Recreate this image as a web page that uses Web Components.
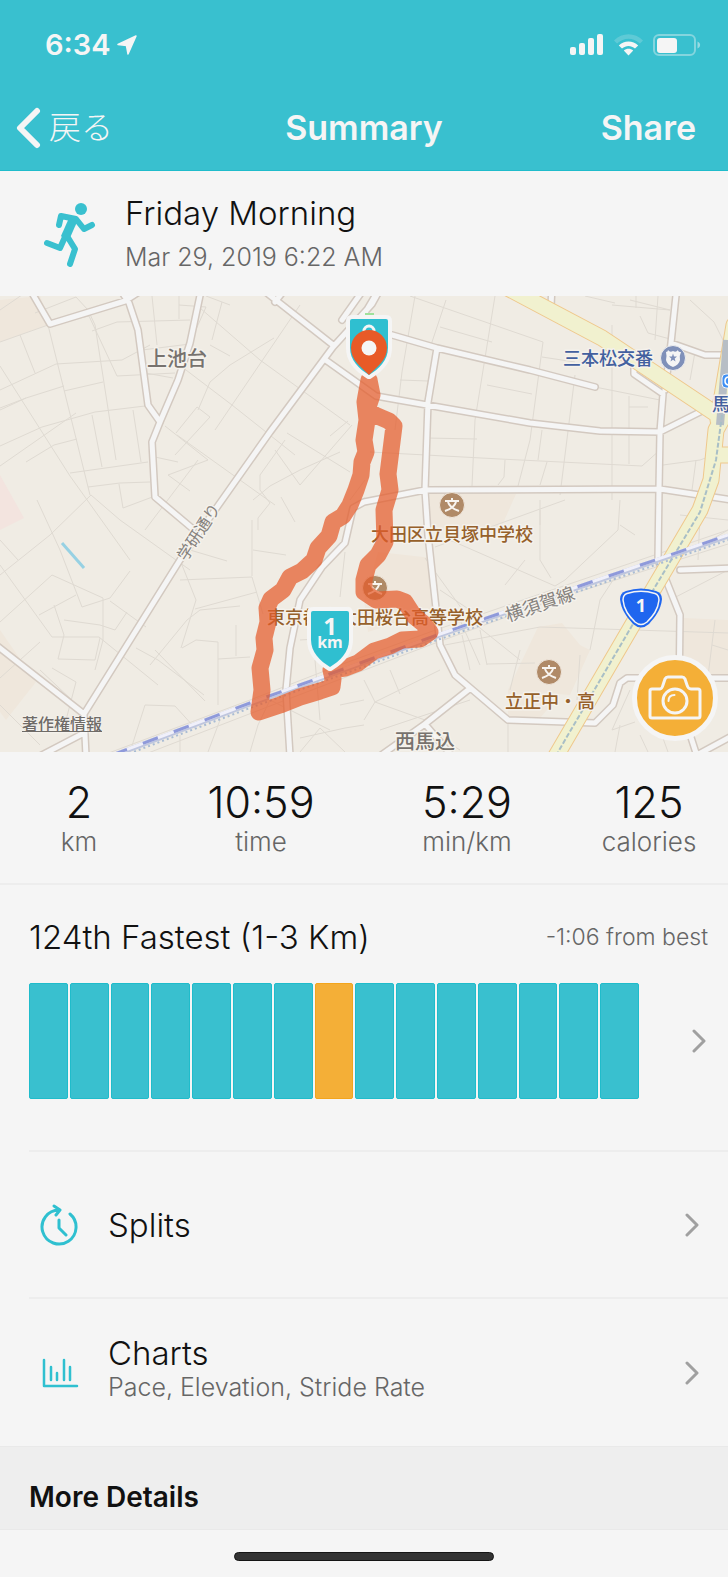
<!DOCTYPE html>
<html lang="en">
<head>
<meta charset="utf-8">
<meta name="viewport" content="width=device-width, initial-scale=1">
<title>Summary</title>
<style>
  body { margin: 0; background: #f5f5f5; color: #111; font-family: Inter, "Noto Sans CJK JP", sans-serif; }
</style>
</head>
<body>
<run-summary></run-summary>

<script>
const define = (name, html) => customElements.define(name, class extends HTMLElement {
  constructor() {
    super();
    this.attachShadow({ mode: 'open' }).innerHTML = html;
  }
});

define('status-bar', `
  <style>
    :host { display: flex; align-items: center; justify-content: space-between; height: 88px; padding: 2px 27px 0 45px; box-sizing: border-box; }
    .time, .signs { display: flex; align-items: center; }
    .time { gap: 6px; font-size: 29px; font-weight: 600; line-height: 32px; }
    .signs { gap: 10px; }
    svg { display: block; fill: currentColor; }
  </style>
  <div class="time"><span>6:34</span>
    <svg width="20" height="20" viewBox="0 0 20 20"><path d="M19 1 11 19 9.500 10.500 1 9.500Z" stroke="currentColor" stroke-width="1.500" stroke-linejoin="round"/></svg>
  </div>
  <div class="signs">
    <svg width="34" height="22" viewBox="0 0 34 22"><rect y="13" width="6" height="8" rx="2"/><rect x="9" y="9" width="6" height="12" rx="2"/><rect x="18" y="4" width="6" height="17" rx="2"/><rect x="27" width="6" height="21" rx="2"/></svg>
    <svg width="29" height="22" viewBox="0 0 29 22"><path opacity=".2" d="M0 6.500C8-2 21-2 29 6.500L26 9.500C19 3 10 3 3 9.500Z"/><path d="M4.800 11.500C10 6 19 6 24.200 11.500L21 14.500C17 11 12 11 8 14.500Z"/><path d="M9.800 16.500C12.500 14.200 16.500 14.200 19.200 16.500L14.500 21.500Z"/></svg>
    <svg width="48" height="22" viewBox="0 0 48 22"><rect x="1" y="1" width="41" height="20" rx="5" fill="none" stroke="currentColor" stroke-width="2" opacity=".4"/><rect x="4" y="4" width="20" height="15" rx="3"/><path d="M44.500 7.500C48 9 48 13 44.500 14.500Z" opacity=".5"/></svg>
  </div>`);

define('nav-bar', `
  <style>
    :host { display: grid; grid-template-columns: 1fr auto 1fr; align-items: center; height: 82px; padding: 0 32px 2px; box-sizing: border-box; }
    button { all: unset; cursor: pointer; display: flex; align-items: center; font-size: 34px; line-height: 48px; }
    .back { justify-self: start; gap: 8px; margin-left: -16px; font-size: 32px; font-weight: 300; }
    .share { justify-self: end; font-weight: 600; }
    h1 { margin: 0; font-size: 34px; line-height: 48px; font-weight: 600; }
    svg { display: block; }
  </style>
  <button class="back"><svg width="25" height="42" viewBox="0 0 25 42" fill="none" stroke="currentColor" stroke-width="6" stroke-linecap="round" stroke-linejoin="round"><path d="M21 4 4 21 21 38"/></svg><span><slot name="back"></slot></span></button>
  <h1><slot></slot></h1>
  <button class="share"><slot name="action"></slot></button>`);

define('activity-head', `
  <style>
    :host { display: flex; align-items: center; gap: 29px; height: 125px; padding: 0 44px; box-sizing: border-box; }
    svg { display: block; color: #39c0cf; }
    .name { font-size: 33px; line-height: 46px; font-weight: 300; }
    .date { font-size: 25px; line-height: 42px; font-weight: 300; color: #666; }
    h2, p { margin: 0; }
  </style>
  <svg width="52" height="66" viewBox="0 0 52 66" fill="none" stroke="currentColor" stroke-linecap="round" stroke-linejoin="round">
    <circle cx="37" cy="8" r="6" fill="currentColor" stroke="none"/>
    <path d="M15 24 17 15 32 18 40 28 48 24M21 36 16 47 3 42M23 35 31 48 26 63" stroke-width="6"/><path d="M29 19 21 37" stroke-width="9" stroke-linecap="butt"/>
  </svg>
  <div><h2 class="name"><slot></slot></h2><p class="date"><slot name="date"></slot></p></div>`);

define('camera-button', `
  <style>
    :host { display: block; }
    button { all: unset; cursor: pointer; display: grid; place-items: center; width: 76px; height: 76px; border: 5px solid #f5f5f5; border-radius: 50%; background: #f4af37; }
    svg { display: block; }
  </style>
  <button aria-label="Add photo"><svg width="54" height="46" viewBox="0 0 54 46" fill="none" stroke="#f5f5f5" stroke-width="3" stroke-linejoin="round">
    <path d="M4 14H12Q14 14 15 10L17 4Q18 2 20 2H34Q36 2 37 4L39 10Q40 14 43 14H50Q52 14 52 16V41Q52 43 50 43H4Q2 43 2 41V16Q2 14 4 14Z"/><circle cx="27" cy="26" r="12"/><path d="M20.500 26Q20.500 20 26.500 20" stroke-width="2" stroke-linecap="round"/></svg></button>`);

define('route-map', `
  <style>
    :host { display: block; position: relative; }
    svg { display: block; width: 100%; height: auto; font-family: "Noto Sans CJK JP", sans-serif; }
    .halo { paint-order: stroke; stroke: #f5f2ec; stroke-width: 3px; stroke-linejoin: round; }
    .school { fill: #96602a; font-size: 18px; font-weight: 500; }
    .area { fill: #77726e; font-size: 20px; font-weight: 500; }
    .way { fill: #85817d; }
    .blue { fill: #43609f; font-size: 18px; font-weight: 500; }
    .bold { font-family: "Open Sans", "Noto Sans", sans-serif; font-weight: 700; fill: #f5f5f5; text-anchor: middle; }
    a { position: absolute; left: 22px; bottom: 17px; font: 500 16px/24px "Noto Sans CJK JP", sans-serif; color: #6f6b67; text-shadow: 0 0 2px #fff; }
    camera-button { position: absolute; right: 10px; bottom: 11px; }
  </style>
  <svg viewBox="0 296 728 456" role="img" aria-label="Map of the run">
    <defs>
      <path id="roads" d="M28 286 50 324 125 301 145 288M118 286 129 303 138 330 148 405 160 422M202 286 190 343 178 380 160 422 152 442 155 497 193 529M382 286 372 304 333 347 270 432 215 510 180 560 84 714 86 756M40 756 84 733M-4 645 84 714M258 286 333 345M275 302 286 288M327 361 362 386 376 396 427 405 530 423 600 431 660 432 702 411M375 330 437 348 530 370 595 387M437 348 428 402 425 490 428 535 440 645 455 675 508 720 595 723 613 705 620 683 627 678 732 678M364 502 425 490 660 489 732 500M634 365 634 374 663 394 660 432 659 489 658 560 680 615 679 700 697 756M677 286 671 343 665 390M671 343 705 355 732 355M552 286 551 306M680 570 732 568M468 690 425 724 380 756M425 724 452 756M364 502 353 508 345 543 322 567 300 600 290 648 286 690 290 756M695 756 732 736M366 286 342 320M381 286 362 318"/>
      <path id="avenues" d="M500 284 602 338 722 418M735 396 716 430 711 480 700 510 640 612 556 756M734 325 718 420M716 455H732"/>
      <g id="school"><circle r="12.500" fill="#b08a67" stroke="#efe6dc"/><path d="M0-7V-4M-7-4H7M-4-3Q-2 3 7 6M4-3Q2 3-7 6" fill="none" stroke="#f8f4ef" stroke-width="2"/></g>
      <path id="badge" d="M-17-28H17Q19-28 19-26V1C19 13 10 22 0 28C-10 22-19 13-19 1V-26Q-19-28-17-28Z"/>
    </defs>
    <rect y="296" width="728" height="456" fill="#f0ece4"/>
    <path fill="#efe7dc" d="M0 300 40 296 50 324 0 342ZM0 630 36 682 6 720 0 712ZM430 494 516 494 500 530 428 528ZM378 552 432 558 436 610 368 632 364 600ZM538 627 562 623 580 645 590 650 570 695 508 690ZM508 690 560 695 540 718 508 718ZM684 618 728 620V676H682Z"/>
    <path fill="#f3e4df" d="M0 475 24 518 0 530Z"/>
    <g fill="none" stroke="#dfdad2" stroke-width="1">
      <path d="M0 342 48 325 89 316M20 335 35 373M0 390 56 364 122 360 150 345M89 316 117 376 175 373M48 325 90 495M64 391 103 382M0 408 26 398 64 386M0 446 42 427 95 412 145 406M0 466 76 413M0 366 70 476 130 560M26 462 54 445 77 439M92 415 102 467M70 473 148 462M133 410 141 462M88 487 120 483 150 482M119 484 123 508 155 496M26 398 0 410M0 575 50 535 91 495 120 520 190 570M37 500 60 550 82 607 110 598 130 571M0 622 52 575 103 598M0 565 52 637 99 637M76 595 39 615M54 605 64 635 58 659 95 660 100 638M64 620 100 625 115 630 127 612M40 642 0 678M52 668 76 682 66 720M0 540 18 560M103 598V640L95 670M99 637 158 685M110 601 146 627M150 665 187 620 200 610 240 606M182 648 196 640 218 642V705M218 659 250 657M236 625V656M180 580 252 577 263 614M180 560 196 600 181 648M190 550 227 561M195 609 257 592M252 520V576M253 550 286 555M253 500 270 486 300 470 340 452M260 475 260 490 270 503 258 518V530M275 450 300 485 352 425M260 475 285 440M281 497 295 522M198 410 210 382 230 365 274 338M186 370 232 405 295 455M177 435 275 505M165 426 208 460 168 475 190 491M176 433 197 407 210 417 175 455M215 430 300 305M198 460 145 530M140 372 173 378M155 457 178 462M179 305 206 307 190 343M200 308 260 360 350 425M210 345 230 356M212 340 222 302M287 433 350 472M330 436 348 421M0 310 35 286M35 313 76 297 88 310 95 325 102 370 116 460M92 331 117 322 190 320M152 296 157 345M179 292V319M206 296 230 305M142 350 190 344M74 702 40 670M0 705 40 745M130 752 145 705 175 706 195 728M155 650 205 701M136 648 158 660 204 695M180 752V735M208 752 220 720M250 752 258 725 270 700 330 730M300 738 345 728 364 725"/>
      <path d="M410 296 543 342M415 296 402 372 395 430M446 300 430 348M495 296 475 420 472 486M440 327 492 342M542 357 575 362M400 380 428 381M487 385 532 394M543 342 530 440 518 486M575 375 560 495M542 430 538 460M426 438 477 439M370 452 500 459 642 466 660 450M612 325V500M629 396V464M629 407H648M595 387 660 400M640 316 648 333 670 339M612 305 670 310 630 300M690 300 714 322 728 350M695 352 690 380M663 465 700 460 728 450M696 460 692 490M505 460 504 477 498 485M547 462 540 485M540 510V525M585 296 615 303M636 296V308M658 296 655 340M620 500 618 530 565 580 555 586 450 540M435 547 565 500M425 558 470 620 520 660M440 590 470 610M460 620 480 665M480 630 487 665M462 635 470 670M487 664 535 663M445 645 540 627 728 633M505 585 525 560M540 500V560L551 578M617 574 600 600 590 650M620 525 635 535M580 655 577 700M520 650 510 690M364 680 375 702 440 670M375 702 364 720M375 702 425 720M400 694 390 670M380 730 470 700M425 728 460 750M508 720V752M630 690 612 730 635 722M620 725 615 752M660 730 668 752M640 735 648 752M715 620 705 700M728 650 712 645M670 600 728 570M680 515 728 520M700 515 698 560M728 530 690 552M345 552 340 597M350 500 365 480M300 640 330 638M315 660 320 720M340 705 364 700M300 752 320 728 345 752"/>
      <path d="M90 760 250 700 340 665 430 632 540 594 728 530M130 760 270 706 430 645 550 601 728 544"/>
    </g>
    <path d="M62 543 84 568" stroke="#97d1e3" stroke-width="3"/>
    <g fill="none" stroke-linejoin="round" stroke-linecap="round">
      <use href="#roads" stroke="#d3c9c0" stroke-width="8"/>
      <use href="#roads" stroke="#f5f5f5" stroke-width="5"/>
      <use href="#avenues" stroke="#efc88c" stroke-width="17"/>
      <use href="#avenues" stroke="#f1f1cf" stroke-width="15"/>
    </g>
    <path d="M727 340 720 425" stroke="#b7bec5" stroke-width="8"/>
    <path d="M722 415 716 460 700 512 640 612 558 752" fill="none" stroke="#a9bfc6" stroke-width="2" stroke-dasharray="5 2"/>
    <g fill="none">
      <path d="M112 756 250 704 440 635 728 536" stroke="#bfc6de" stroke-width="5"/>
      <path d="M112 755 250 703 440 634 728 535" stroke="#f0f0fa" stroke-width="3"/>
      <path d="M112 755 250 703 440 634 728 535" stroke="#8f9ada" stroke-width="3" stroke-dasharray="16 17"/>
      <path d="M120 757 250 708 440 639 728 540" stroke="#a9bcd4" stroke-width="2" stroke-dasharray="2 3"/>
    </g>
    <use href="#school" x="452" y="505"/><use href="#school" x="375" y="588"/><use href="#school" x="549" y="672"/>
    <g class="halo">
      <text class="area" x="147" y="366">上池台</text>
      <text class="area" x="395" y="749">西馬込</text>
      <text class="blue" x="563" y="365">三本松交番</text>
      <text class="blue" x="712" y="411">馬</text>
      <text class="school" x="371" y="541">大田区立貝塚中学校</text>
      <text class="school" x="267" y="624">東京都立大田桜台高等学校</text>
      <text class="school" x="505" y="708">立正中・高</text>
      <text class="way" font-size="18" transform="translate(508 622) rotate(-19)">横須賀線</text>
      <text class="way" font-size="16" transform="translate(186 562) rotate(-57)">学研通り</text>
    </g>
    <circle cx="673" cy="358" r="12.500" fill="#7f90b9" stroke="#eee"/>
    <path d="M666 352Q668 352 668 350Q670 353 673 351Q676 353 678 350Q678 352 681 352Q679 356 680 360Q679 365 673 367Q667 365 666 360Q667 356 666 352Z" fill="#f5f5f5"/>
    <path d="M673 353.500 674 356.500H677L674.700 358.500 675.500 361.500 673 359.700 670.500 361.500 671.300 358.500 669 356.500H672Z" fill="#7f90b9"/>
    <rect x="722" y="374" width="16" height="14" rx="4" fill="#3f90f4" stroke="#f5f5f5"/><path d="M729 377Q725 377 725 381T729 385" fill="none" stroke="#fff" stroke-width="1.500"/>
    <path d="M626 591Q641 586 656 591Q662 593 662 599C661 610 655 617 649 624Q641 631 633 624C627 617 621 610 620 599Q620 593 626 591Z" fill="#1f66ef"/>
    <path d="M627 593.500Q641 589 655 593.500Q659 595 659 600C658 610 653 616 647 622Q641 627 635 622C629 616 624 610 623 600Q623 595 627 593.500Z" fill="none" stroke="#f5f5f5" stroke-width="1.500"/>
    <text class="bold" x="641" y="612" font-size="18">1</text>
    <path fill="none" stroke="#e45b2b" stroke-opacity=".72" stroke-width="17" stroke-linejoin="round" stroke-linecap="round" d="M369 380 366 396 365 402 367 420 364 440 366 452 362 462 361 475 356 490 350 505 343 516 333 522 329 536 318 548 314 560 302 571 290 577 283 590 271 599 267 608 268 622 264 638 265 650 260 668 262 690 259 712 280 705 300 697 320 691 332 687 333 679 331 670 345 668 358 663 374 651 390 646 402 640 420 639 430 632 424 624 414 616 405 602 397 599 376 600 364 592 364 580 368 565 378 555 385 542 384 510 390 490 388 474 391 450 394 426 389 421 375 415 367 410 372 395 369 380"/>
    <g transform="translate(369 347)">
      <path d="M-4-34H5V-30H-4Z" fill="#9fe19b"/>
      <use href="#badge" fill="none" stroke="#f5f5f5" stroke-width="8" stroke-linejoin="round"/>
      <use href="#badge" fill="#2fbfd0"/>
      <circle cy="-16" r="5" fill="none" stroke="#f5f5f5" stroke-width="3"/>
      <path d="M0 28C-8 20-18 13-18 1A18 18 0 0 1 18 1C18 13 8 20 0 28Z" fill="#e85a27"/><circle cy="1" r="7.500" fill="#f5f5f5"/>
    </g>
    <g transform="translate(330 639)"><use href="#badge" fill="none" stroke="#f5f5f5" stroke-width="8" stroke-linejoin="round"/><use href="#badge" fill="#2fbfd0"/><text class="bold" y="-4" font-size="24">1</text><text class="bold" y="9" font-size="16">km</text></g>
  </svg>
  <a href="#legal">著作権情報</a>
  <camera-button></camera-button>`);

define('stat-item', `
  <style>
    :host { display: block; text-align: center; }
    dt, dd { margin: 0; font-weight: 300; }
    dl { margin: 0; display: flex; flex-direction: column-reverse; }
    dd { font-size: 43px; line-height: 48px; }
    dt { font-size: 26px; line-height: 32px; color: #666; }
  </style>
  <dl><dt><slot name="unit"></slot></dt><dd><slot></slot></dd></dl>`);

define('stat-row', `
  <style>
    :host { display: grid; grid-template-columns: 79fr 103fr 103fr 79fr; height: 133px; padding-top: 26px; box-sizing: border-box; border-bottom: 2px solid #ededed; }
  </style>
  <slot></slot>`);

define('chevron-right', `
  <style>:host { display: block; flex: none; } svg { display: block; }</style>
  <svg width="14" height="24" viewBox="0 0 14 24" fill="none" stroke="#a0a0a0" stroke-width="3" stroke-linecap="round" stroke-linejoin="round"><path d="M2 2 12 12 2 22"/></svg>`);

customElements.define('pace-bars', class extends HTMLElement {
  constructor() {
    super();
    const count = Number(this.getAttribute('count'));
    const current = Number(this.getAttribute('current'));
    const bars = Array.from({ length: count }, (_, i) => `<i${i + 1 === current ? ' class="on"' : ''}></i>`).join('');
    this.attachShadow({ mode: 'open' }).innerHTML = `
      <style>
        :host { display: flex; flex: 1; gap: 2px; height: 116px; }
        i { flex: 1; background: #39c0cf; border: 1px solid #1fbccb; border-radius: 2px; box-sizing: border-box; }
        .on { background: #f4af37; border-color: #f3a51c; }
      </style>${bars}`;
  }
});

define('rank-card', `
  <style>
    :host { display: block; margin-left: 29px; height: 267px; padding: 28px 20px 0 0; box-sizing: border-box; border-bottom: 2px solid #ededed; }
    header { display: flex; justify-content: space-between; align-items: center; }
    h2 { margin: 0; font-size: 33px; line-height: 48px; font-weight: 300; }
    p { margin: 0; font-size: 23px; line-height: 48px; font-weight: 300; color: #666; }
    .chart { display: flex; align-items: center; justify-content: space-between; gap: 53px; margin: 22px 2px 0 0; color: inherit; text-decoration: none; }
  </style>
  <header><h2><slot></slot></h2><p><slot name="gap"></slot></p></header>
  <a class="chart" href="#rank" aria-label="Ranking"><pace-bars count="15" current="8"></pace-bars><chevron-right></chevron-right></a>`);

define('menu-row', `
  <style>
    :host { display: block; margin-left: 29px; }
    a { display: flex; align-items: center; height: 147px; padding: 0 29px 0 10px; box-sizing: border-box; border-bottom: 2px solid #ededed; color: inherit; text-decoration: none; }
    :host([last]) a { border-bottom: 0; }
    .icon { width: 69px; }
    .text { flex: 1; }
    .title { display: block; font-size: 33px; line-height: 36px; font-weight: 300; }
    .sub { display: block; font-size: 25px; line-height: 32px; font-weight: 300; color: #666; }
    ::slotted([slot=sub]) { display: block; padding-bottom: 8px; }
  </style>
  <a href="#more"><span class="icon"><slot name="icon"></slot></span><span class="text"><span class="title"><slot></slot></span><span class="sub"><slot name="sub"></slot></span></span><chevron-right></chevron-right></a>`);

define('splits-icon', `
  <style>:host { display: block; } svg { display: block; }</style>
  <svg width="40" height="42" viewBox="0 0 40 42" fill="none" stroke="#2fc0d0" stroke-width="3" stroke-linecap="round" stroke-linejoin="round"><path d="M31 10A17 17 0 1 1 20 6M15 2 21 6 17 11M20 16V24L27 31"/></svg>`);

define('charts-icon', `
  <style>:host { display: block; } svg { display: block; }</style>
  <svg width="40" height="30" viewBox="0 0 40 30" fill="none" stroke="#2fc0d0" stroke-width="2.500" stroke-linecap="round" stroke-linejoin="round"><path d="M5 2V28H38M12 9V22M18 15V22M25 2V22M31 9V22"/></svg>`);

define('details-head', `
  <style>
    :host { display: block; height: 84px; padding: 26px 29px 0; box-sizing: border-box; background: #eee; border: solid #e9e9e9; border-width: 1px 0; }
    h2 { margin: 0; font-size: 28px; line-height: 48px; font-weight: 600; }
  </style>
  <h2><slot></slot></h2>`);

define('home-indicator', `
  <style>
    :host { display: flex; justify-content: center; padding: 22px 0 16px; }
    i { width: 260px; height: 9px; border-radius: 5px; background: #333; border: 1px solid #151515; box-sizing: border-box; }
  </style>
  <i></i>`);

define('run-summary', `
  <style>
    :host { display: block; }
    .top { background: #39c0cf; color: #f5f5f5; border-bottom: 1px solid #1fbccb; }
  </style>
  <div class="top">
    <status-bar></status-bar>
    <nav-bar><span slot="back">戻る</span>Summary<span slot="action">Share</span></nav-bar>
  </div>
  <main>
    <activity-head>Friday Morning<span slot="date">Mar 29, 2019 6:22 AM</span></activity-head>
    <route-map></route-map>
    <stat-row>
      <stat-item>2<span slot="unit">km</span></stat-item>
      <stat-item>10:59<span slot="unit">time</span></stat-item>
      <stat-item>5:29<span slot="unit">min/km</span></stat-item>
      <stat-item>125<span slot="unit">calories</span></stat-item>
    </stat-row>
    <rank-card>124th Fastest (1-3 Km)<span slot="gap">-1:06 from best</span></rank-card>
    <menu-row><splits-icon slot="icon"></splits-icon>Splits</menu-row>
    <menu-row last><charts-icon slot="icon"></charts-icon>Charts<span slot="sub">Pace, Elevation, Stride Rate</span></menu-row>
    <details-head>More Details</details-head>
  </main>
  <home-indicator></home-indicator>`);
</script>
</body>
</html>
